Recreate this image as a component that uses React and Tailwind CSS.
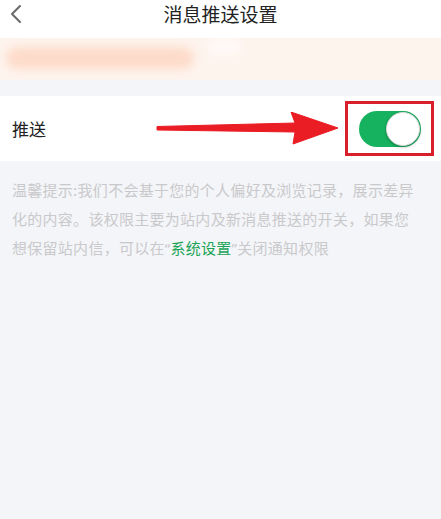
import React from "react";

export default function App() {
  const font = { fontFamily: '"Noto Sans CJK SC", "Noto Sans", sans-serif' };
  const q = { fontFamily: '"Noto Sans", sans-serif' };
  return (
    <div className="w-[441px] h-[519px] bg-[#f4f5f8] overflow-hidden" style={font}>
      {/* header */}
      <div className="h-[33px] bg-white relative flex items-center justify-center">
        <svg className="absolute left-[9px] top-[4px]" width="14" height="20" viewBox="0 0 14 20">
          <path d="M11 2 L3 10 L11 18" fill="none" stroke="#6b6b6b" strokeWidth="2" strokeLinecap="round" strokeLinejoin="round" />
        </svg>
        <div className="text-[19px] leading-none text-[#222] mt-[-6px]">消息推送设置</div>
      </div>
      {/* banner */}
      <div className="h-[5px] bg-white" />
      <div className="h-[42px] bg-[#fef4ee] relative overflow-hidden">
        <div className="absolute left-[6px] top-[9px] w-[188px] h-[22px] rounded-full bg-[#fddbc9] blur-[5px]" />
        <div className="absolute left-[210px] top-[2px] w-[30px] h-[14px] bg-white/60 blur-[4px]" />
      </div>
      <div className="h-[16px] bg-[#f3f5f9]" />
      {/* row */}
      <div className="h-[65px] bg-white flex items-center pl-[12px] pr-[7px] relative">
        <div className="text-[17px] text-[#222] leading-none">推送</div>
        <div className="flex-1" />
        <div className="w-[89px] h-[55px] border-[3px] border-[#d91f2b] flex items-center justify-center">
          <div className="w-[62px] h-[36px] rounded-full bg-[#17b25f] relative">
            <div className="absolute right-[1px] top-[1px] w-[34px] h-[34px] rounded-full bg-white border border-[#d8d8d8] shadow-[0_1px_3px_rgba(0,0,0,0.3)]" />
          </div>
        </div>
        <svg className="absolute left-[154px] top-[16px]" width="186" height="36" viewBox="0 0 186 36">
          <path d="M3 14.5 L141 11 L137 0 L184 16 L139 32 L141 20 L3 18 Z" fill="#ea1c24" strokeLinejoin="round" stroke="#ea1c24" strokeWidth="1" />
        </svg>
      </div>
      {/* tip */}
      <div className="pl-[12px] pt-[14px] text-[15px] tracking-[0.28px] leading-[29px] text-[#c9c9cc] whitespace-nowrap">
        温馨提示:我们不会基于您的个人偏好及浏览记录，展示差异<br />
        化的内容。该权限主要为站内及新消息推送的开关，如果您<br />
        想保留站内信，可以在<span style={q}>“</span><span className="text-[#1aa457]">系统设置</span><span style={q}>”</span>关闭通知权限
      </div>
    </div>
  );
}
